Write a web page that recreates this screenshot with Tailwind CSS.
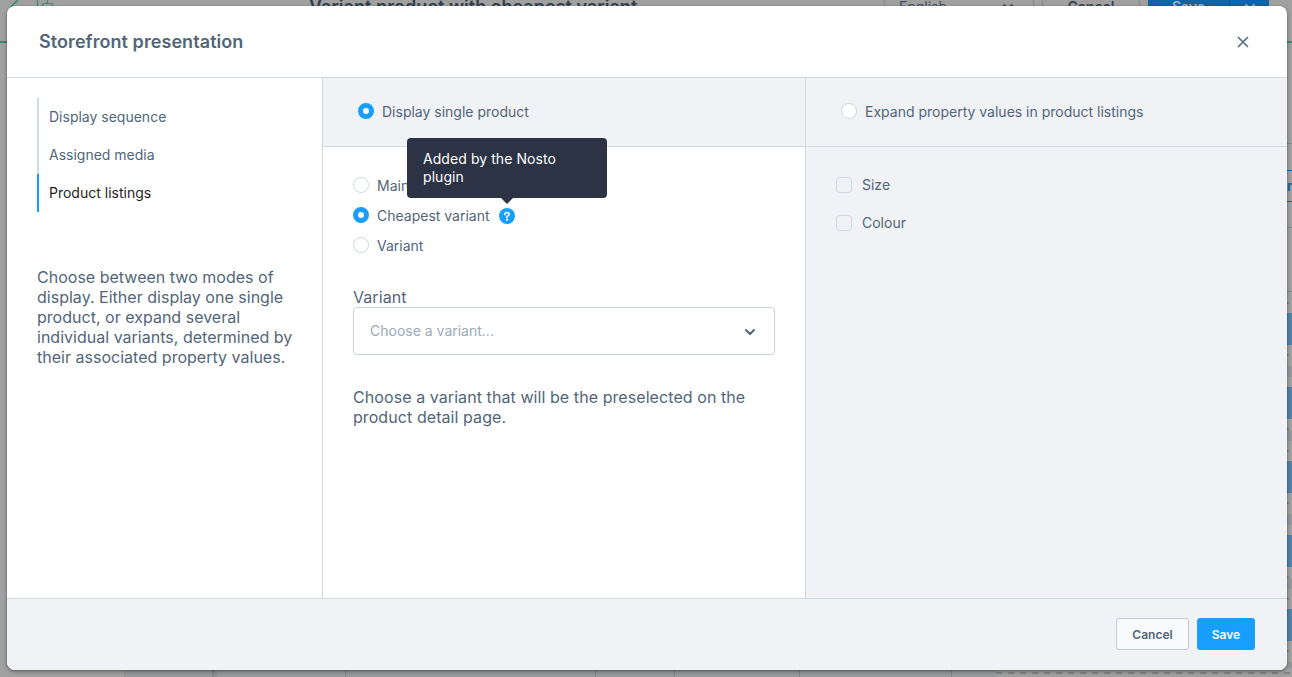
<!DOCTYPE html>
<html lang="en">
<head>
<meta charset="utf-8">
<title>Storefront presentation</title>
<script src="https://cdn.jsdelivr.net/npm/@tailwindcss/browser@4"></script>
</head>
<body class="relative h-[677px] w-[1292px] overflow-hidden bg-[#a0a0a0] font-['Inter',sans-serif] text-sm text-[#52667a]">

<!-- Product page behind the dialog -->
<div class="absolute inset-0 flex flex-col overflow-hidden" aria-hidden="true">
  <div class="flex h-[43px] shrink-0 items-start border-b-2 border-[#39896a]">
    <svg class="-mt-2 ml-2 h-6 w-12 shrink-0" viewBox="0 0 48 24" fill="none" stroke="#39896a" stroke-width="1.2"><path d="M3 15 10 8 M3 14.500 10.500 7M29.500 0v18M34.500 18v-5q0-1.500 1.500-1.500h7q1.500 0 1.500 1.500v5M39.500 5v6"/></svg>
    <div class="-mt-[6px] ml-[253px] w-[575px] shrink-0 whitespace-nowrap text-lg leading-[26px] font-semibold tracking-[0.04px] text-[#313f4d]">Variant product with cheapest variant</div>
    <div class="-mt-[11px] flex h-9 w-[150px] shrink-0 items-center justify-between border-x border-[#84888e] px-[14px] text-[#414e5c]"><span>English</span>
      <svg class="mr-[5px] mb-[3px] h-3 w-3" viewBox="0 0 12 12" fill="none" stroke="#3d4b59" stroke-width="2"><path d="m1.500 4.500 4.500 4 4.500-4"/></svg></div>
    <div class="-mt-[11px] ml-2 flex h-9 w-[98px] shrink-0 items-center justify-center border-x border-[#84888e] text-sm font-semibold text-[#36434f]">Cancel</div>
    <div class="-mt-[11px] ml-2 flex h-9 w-[81px] shrink-0 items-center justify-center bg-[#1065a6] text-sm font-semibold text-[#a5b1bd]">Save</div>
    <div class="-mt-[11px] flex h-9 w-10 shrink-0 items-center justify-center border-l border-[#0b5085] bg-[#1065a6]"><svg class="mb-[3px] h-3 w-3" viewBox="0 0 12 12" fill="none" stroke="#9eacba" stroke-width="2"><path d="m1.500 4.500 4.500 4 4.500-4"/></svg></div>
  </div>
  <div class="flex h-[625px] shrink-0 justify-end">
    <div class="flex w-[5px] flex-col">
      <div class="h-[101px] border-b border-[#84878b]"></div>
      <div class="h-[27px] border-b border-[#1065a6]"></div>
      <div class="flex h-[31px] items-center overflow-hidden border-b border-[#1065a6] font-semibold text-[#1065a6]">r</div>
      <div class="h-[26px] border-b border-[#84878b]"></div>
      <div class="h-16 border-b border-[#84878b]"></div>
      <div class="h-[21px] pt-[10px]"><div class="h-[2px] w-[2px] bg-[#7f8488]"></div></div>
      <div class="h-8 bg-[#5182a8]"></div>
      <div class="h-[42px] py-[9px]"><div class="h-[2px] w-[2px] bg-[#7f8488]"></div><div class="mt-[10px] h-[11px] bg-[#96979c]"></div></div>
      <div class="h-8 bg-[#5182a8]"></div>
      <div class="h-[42px] py-[9px]"><div class="h-[2px] w-[2px] bg-[#7f8488]"></div><div class="h-[11px] bg-[#96979c]"></div><div class="mt-[9px] h-[2px] w-[2px] bg-[#7f8488]"></div></div>
      <div class="h-8 bg-[#5182a8]"></div>
      <div class="h-[42px] py-[9px]"><div class="h-[2px] w-[2px] bg-[#7f8488]"></div><div class="mt-[10px] h-[11px] bg-[#96979c]"></div></div>
      <div class="h-8 bg-[#5182a8]"></div>
      <div class="h-[42px] py-[9px]"><div class="h-[2px] w-[2px] bg-[#7f8488]"></div><div class="h-[11px] bg-[#96979c]"></div><div class="mt-[9px] h-[2px] w-[2px] bg-[#7f8488]"></div></div>
      <div class="h-8 bg-[#5182a8]"></div>
      <div class="h-[27px] pt-[9px]"><div class="h-[2px] w-[2px] bg-[#7f8488]"></div><div class="mt-[10px] h-[6px] bg-[#96979c]"></div></div>
    </div>
  </div>
  <div class="flex h-[9px] shrink-0">
    <div class="w-[124px]"></div>
    <div class="w-[88px] border-l border-[#929395] bg-[#97989b]"></div>
    <div class="w-[134px] border-r border-[#83888c] bg-linear-to-r from-[#85878a] from-0% to-[#98999c] to-5%"></div>
    <div class="w-[250px] border-r border-[#83888c] bg-[#98999c]"></div>
    <div class="w-[79px] border-r border-[#83888c] bg-[#98999c]"></div>
    <div class="w-[125px] border-r border-[#83888c] bg-[#98999c]"></div>
    <div class="w-[152px] border-r border-[#83888c] bg-[#98999c]"></div>
    <div class="w-[44px] bg-[#98999c]"></div>
    <div class="flex-1 pt-1"><div class="h-[2px] bg-[repeating-linear-gradient(90deg,#7f8488_0_6px,transparent_6px_12px)]"></div></div>
  </div>
</div>

<!-- Dialog -->
<main class="relative mt-[6px] ml-[7px] flex h-[664px] w-[1280px] flex-col rounded-lg bg-white shadow-[0_1px_3px_rgba(0,0,0,0.3),0_2px_4px_rgba(0,0,0,0.2)]">
  <header class="flex h-[72px] shrink-0 items-center justify-between border-b border-[#d1d9e0] pr-[38px] pl-8">
    <h1 class="text-lg font-semibold tracking-[0.07px]">Storefront presentation</h1>
    <svg class="h-3 w-3" viewBox="0 0 12 12" fill="none" stroke="#566e86" stroke-width="1.7" stroke-linecap="round"><path d="m1.500 1.500 9 9M10.500 1.500l-9 9"/></svg>
  </header>

  <div class="flex h-[520px] shrink-0">
    <aside class="w-[316px] shrink-0 border-r border-[#d1d9e0] pt-5 pl-[30px]">
      <nav class="flex flex-col">
        <a class="flex h-[38px] items-center border-l-2 border-[#d1d9e0] pl-[10px]">Display sequence</a>
        <a class="flex h-[38px] items-center border-l-2 border-[#d1d9e0] pl-[10px]">Assigned media</a>
        <a class="flex h-[38px] items-center border-l-2 border-[#189eff] pl-[10px] text-[#1c1f24]">Product listings</a>
      </nav>
      <p class="mt-[55px] text-base leading-5 tracking-[0.015px]">Choose between two modes of<br>display. Either display one single<br>product, or expand several<br>individual variants, determined by<br>their associated property values.</p>
    </aside>

    <section class="w-[483px] shrink-0 border-r border-[#d1d9e0]">
      <label class="flex h-[69px] items-center gap-2 border-b border-[#d1d9e0] bg-[#f0f2f5] pl-[35px]">
        <span class="mb-[2px] h-4 w-4 rounded-full border-5 border-[#189eff] bg-white"></span><span>Display single product</span>
      </label>
      <div class="px-[30px] pt-6">
        <div class="flex h-[30px] items-center gap-2"><span class="mb-[2px] h-4 w-4 rounded-full border border-[#d1d9e0] bg-white"></span><span>Main product</span></div>
        <div class="flex h-[30px] items-center gap-2"><span class="mb-[2px] h-4 w-4 rounded-full border-5 border-[#189eff] bg-white"></span><span class="w-[114px] whitespace-nowrap">Cheapest variant</span>
          <span class="relative h-4 w-4">
            <svg class="h-4 w-4" viewBox="0 0 16 16" fill="none"><circle cx="8" cy="8" r="8" fill="#189eff"/><path d="M5.900 6.500c0-1.200.9-2 2.100-2s2.100.7 2.100 1.800C10.100 7.600 8 7.700 8 9.200" stroke="white" stroke-width="1.700" stroke-linecap="round"/><circle cx="8" cy="11.700" r="1.100" fill="white"/></svg>
            <span class="absolute bottom-[26px] -left-[92px] flex h-[60px] w-[200px] items-center rounded bg-[#2b3344] px-4 leading-[18px] tracking-[0.07px] text-white">Added by the Nosto<br>plugin
              <svg class="absolute top-[60px] left-[94px] h-[6px] w-3" viewBox="0 0 12 6"><path d="M0 0h12L6 6z" fill="#2b3344"/></svg>
            </span>
          </span>
        </div>
        <div class="flex h-[30px] items-center gap-2"><span class="mb-[2px] h-4 w-4 rounded-full border border-[#d1d9e0] bg-white"></span><span>Variant</span></div>
      </div>
      <div class="px-[30px] pt-[26px] text-base leading-5 tracking-[0.075px]">
        <div>Variant</div>
        <div class="flex h-12 items-center justify-between rounded border border-[#c8d3de] pr-[18px] pl-4 text-sm tracking-normal text-[#9aabbc]"><span>Choose a variant...</span>
          <svg class="mt-[2px] h-3 w-3" viewBox="0 0 12 12" fill="none" stroke="#52667a" stroke-width="2" stroke-linecap="round" stroke-linejoin="round"><path d="m2 4 4 4 4-4"/></svg></div>
        <p class="mt-8">Choose a variant that will be the preselected on the<br>product detail page.</p>
      </div>
    </section>

    <section class="flex-1 bg-[#f0f2f5]">
      <label class="flex h-[69px] items-center gap-2 border-b border-[#d1d9e0] pl-[35px]">
        <span class="mb-[2px] h-4 w-4 rounded-full border border-[#d1d9e0] bg-white"></span><span>Expand property values in product listings</span>
      </label>
      <div class="flex flex-col pt-[19px] pl-[30px]">
        <label class="flex h-[38px] items-center gap-[10px]"><span class="h-4 w-4 rounded border border-[#d1d9e0]"></span><span>Size</span></label>
        <label class="flex h-[38px] items-center gap-[10px]"><span class="h-4 w-4 rounded border border-[#d1d9e0]"></span><span>Colour</span></label>
      </div>
    </section>
  </div>

  <footer class="flex flex-1 items-center justify-end gap-2 rounded-b-lg border-t border-[#d1d9e0] bg-[#f0f2f5] pr-8 pb-px text-xs font-semibold">
    <button class="h-8 w-[73px] rounded-[3px] border border-[#c2ccd6] bg-[#f9fafb] pt-px">Cancel</button>
    <button class="h-8 w-[58px] rounded-[3px] bg-[#189eff] pt-[2px] text-white">Save</button>
  </footer>
</main>
</body>
</html>
